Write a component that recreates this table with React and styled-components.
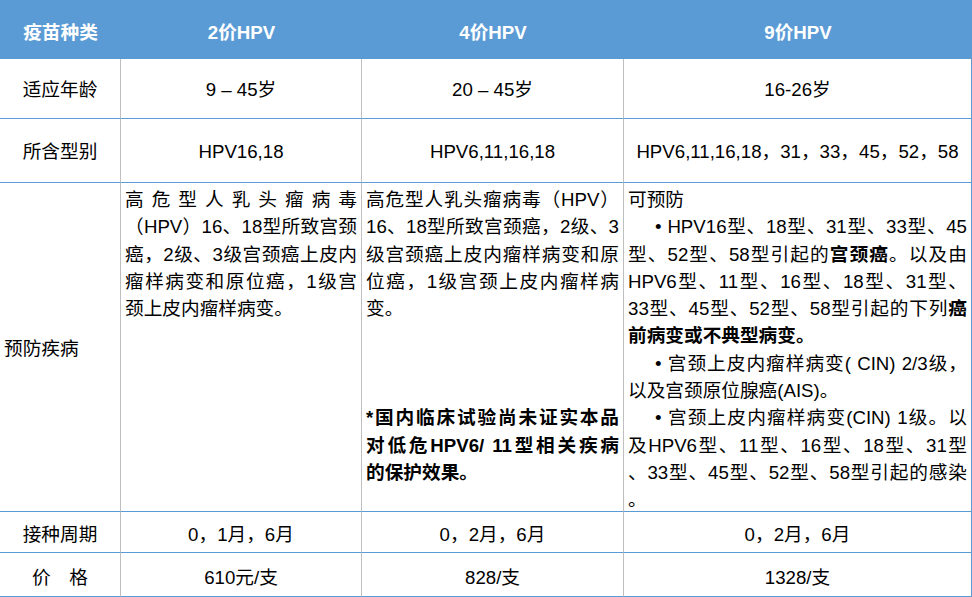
import React from 'react';
import styled, { createGlobalStyle } from 'styled-components';

const Blue = '#5b9bd5';
const Gray = '#bfbfbf';

const GlobalStyle = createGlobalStyle`
  body {
    margin: 0;
    background: #fff;
  }
`;

const Table = styled.div`
  display: grid;
  grid-template-columns: 121px 241px 262px 348px;
  grid-template-rows: 59px 60px 64px 329px 41px 44px;
  width: 972px;
  font-family: 'Liberation Sans', 'Noto Sans CJK SC', sans-serif;
  font-size: 18.67px;
  color: #000;
`;

const HeadCell = styled.div`
  background: ${Blue};
  color: #fff;
  font-weight: bold;
  display: flex;
  align-items: center;
  justify-content: center;
  padding-top: 1px;
`;

const Cell = styled.div`
  box-sizing: border-box;
  border-bottom: 1px solid ${Blue};
  border-right: 1px solid ${(p) => (p.$edge ? Blue : Gray)};
  display: flex;
  align-items: ${(p) => (p.$top ? 'flex-start' : 'center')};
  justify-content: ${(p) => (p.$left || p.$top ? 'flex-start' : 'center')};
  padding: ${(p) => (p.$top ? '3px 4px 0 4px' : `${p.$low ? 6 : 3}px 4px 0 4px`)};
  line-height: 27.3px;
  white-space: pre;
`;

const Block = styled.div`
  width: 100%;
  white-space: normal;
  font-weight: ${(p) => (p.$bold ? 'bold' : 'normal')};
  margin-top: ${(p) => (p.$gap ? '82px' : '0')};
`;

const Line = styled.div`
  text-align: justify;
  text-align-last: ${(p) => (p.$last ? 'left' : 'justify')};
  padding-left: ${(p) => (p.$indent ? '27px' : '0')};
`;

const headers = ['疫苗种类', '2价HPV', '4价HPV', '9价HPV'];

const simpleRows = [
  { label: '适应年龄', values: ['9 – 45岁', '20 – 45岁', '16-26岁'] },
  { label: '所含型别', values: ['HPV16,18', 'HPV6,11,16,18', 'HPV6,11,16,18，31，33，45，52，58'] },
];

const bottomRows = [
  { label: '接种周期', values: ['0，1月，6月', '0，2月，6月', '0，2月，6月'] },
  { label: '价　格', values: ['610元/支', '828/支', '1328/支'] },
];

const renderLines = (lines) =>
  lines.map((l, i) => (
    <Line key={i} $last={l.last} $indent={l.indent}>
      {l.text}
    </Line>
  ));

const bivalent = [
  { text: '高危型人乳头瘤病毒' },
  { text: '（HPV）16、18型所致宫颈' },
  { text: '癌，2级、3级宫颈癌上皮内' },
  { text: '瘤样病变和原位癌，1级宫' },
  { text: '颈上皮内瘤样病变。', last: true },
];

const quadrivalent = [
  { text: '高危型人乳头瘤病毒（HPV）' },
  { text: '16、18型所致宫颈癌，2级、3' },
  { text: '级宫颈癌上皮内瘤样病变和原' },
  { text: '位癌，1级宫颈上皮内瘤样病' },
  { text: '变。', last: true },
];

const quadNote = [
  { text: '*国内临床试验尚未证实本品' },
  { text: '对低危HPV6/ 11型相关疾病' },
  { text: '的保护效果。', last: true },
];

const nonavalent = [
  { text: '可预防', last: true },
  { text: '• HPV16型、18型、31型、33型、45', indent: true },
  { text: <>型、52型、58型引起的<b>宫颈癌</b>。以及由</> },
  { text: 'HPV6型、11型、16型、18型、31型、' },
  { text: <>33型、45型、52型、58型引起的下列<b>癌</b></> },
  { text: <b>前病变或不典型病变。</b>, last: true },
  { text: '• 宫颈上皮内瘤样病变( CIN) 2/3级，', indent: true },
  { text: '以及宫颈原位腺癌(AIS)。', last: true },
  { text: '• 宫颈上皮内瘤样病变(CIN) 1级。以', indent: true },
  { text: '及HPV6型、11型、16型、18型、31型' },
  { text: '、33型、45型、52型、58型引起的感染' },
  { text: '。', last: true },
];

const ValueRow = ({ label, values, low }) => (
  <>
    <Cell $low={low}>{label}</Cell>
    {values.map((v, i) => (
      <Cell key={i} $low={low} $edge={i === values.length - 1}>
        {v}
      </Cell>
    ))}
  </>
);

export default function App() {
  return (
    <>
      <GlobalStyle />
      <Table>
        {headers.map((h) => (
          <HeadCell key={h}>{h}</HeadCell>
        ))}
        {simpleRows.map((r) => (
          <ValueRow key={r.label} {...r} />
        ))}
        <Cell $left>预防疾病</Cell>
        <Cell $top>
          <Block>{renderLines(bivalent)}</Block>
        </Cell>
        <Cell $top>
          <div style={{ width: '100%' }}>
            <Block>{renderLines(quadrivalent)}</Block>
            <Block $bold $gap>
              {renderLines(quadNote)}
            </Block>
          </div>
        </Cell>
        <Cell $top $edge>
          <Block>{renderLines(nonavalent)}</Block>
        </Cell>
        {bottomRows.map((r) => (
          <ValueRow key={r.label} {...r} low />
        ))}
      </Table>
    </>
  );
}
